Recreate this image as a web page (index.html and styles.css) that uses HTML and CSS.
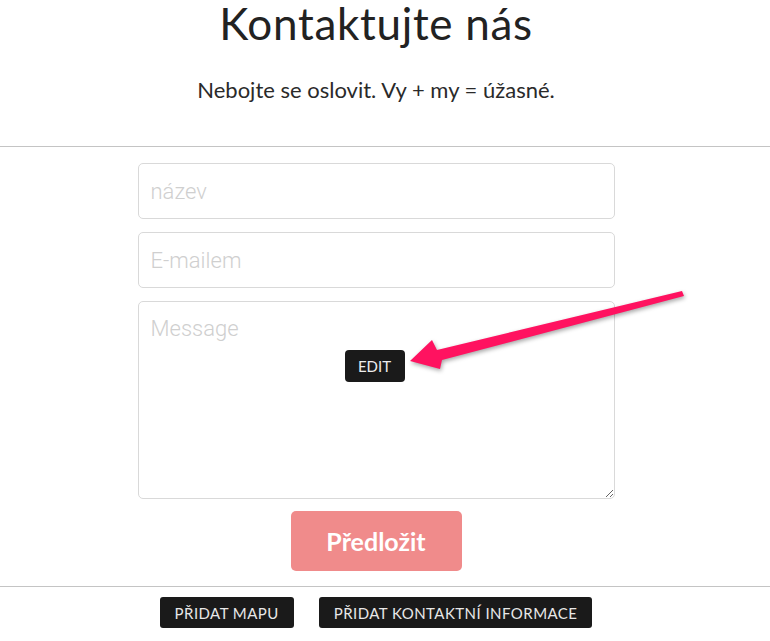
FILE: index.html
```html
<!DOCTYPE html>
<html lang="cs">
<head>
  <meta charset="UTF-8">
  <title>Kontaktujte nás</title>
  <link rel="stylesheet" href="styles.css">
</head>
<body>

<header class="intro">
  <h1>Kontaktujte nás</h1>
  <p>Nebojte se oslovit. Vy + my = úžasné.</p>
</header>

<hr class="divider">

<form class="contact-form">
  <input type="text" class="field" placeholder="název">
  <input type="email" class="field" placeholder="E-mailem">
  <div class="message-wrap">
    <textarea class="field message" placeholder="Message"></textarea>
    <span class="edit-badge">EDIT</span>
    <!-- šipka ukazuje na tlačítko EDIT -->
    <svg class="pointer" width="295" height="100" viewBox="0 0 295 100">
      <polygon points="10,81 32,60 37,70 282,11 284,16 42,80 40,89" fill="#ff1260"/>
    </svg>
  </div>
  <button type="button" class="submit">Předložit</button>
</form>

<hr class="divider">

<div class="block-actions">
  <button type="button" class="block-btn">PŘIDAT MAPU</button>
  <button type="button" class="block-btn">PŘIDAT KONTAKTNÍ INFORMACE</button>
</div>

</body>
</html>
```

FILE: styles.css
```css
* {
  box-sizing: border-box;
}

body {
  margin: 0;
  font-family: 'Lato', sans-serif;
  color: #222;
  background-color: white;
}

.intro,
.contact-form,
.block-actions {
  width: 752px;
}

.intro {
  text-align: center;
  padding-top: 1px;
}

h1 {
  margin: 0;
  font-size: 44px;
  line-height: 44px;
  font-weight: 400;
  letter-spacing: 0.7px;
}

.intro p {
  margin: 30px 0 0;
  font-size: 22px;
  line-height: 29px;
  color: #2a2a2a;
}

.divider {
  margin: 0;
  border: none;
  border-top: 1px solid #c4c4c4;
}

.intro + .divider {
  margin-top: 42px;
}

.contact-form {
  display: flex;
  flex-direction: column;
  align-items: center;
  padding: 16px 0 15px;
}

.field {
  display: block;
  width: 477px;
  height: 56px;
  margin-bottom: 13px;
  padding: 0 12px;
  border: 1px solid #d9d9d9;
  border-radius: 5px;
  font-family: 'Roboto', sans-serif;
  font-weight: 300;
  font-size: 22px;
  color: #333;
  outline: none;
}

.field::placeholder {
  color: #cfcfcf;
}

.message-wrap {
  position: relative;
}

.message {
  height: 198px;
  margin-bottom: 0;
  padding-top: 14px;
  resize: vertical;
}

.edit-badge {
  position: absolute;
  left: 207px;
  top: 49px;
  width: 60px;
  height: 32px;
  line-height: 32px;
  background-color: #1a1a1a;
  border-radius: 4px;
  color: #eee;
  font-size: 15px;
  text-align: center;
}

.pointer {
  position: absolute;
  left: 262px;
  top: -21px;
  filter: drop-shadow(1px 2px 2px rgba(0,0,0,0.35));
}

.submit {
  margin-top: 12px;
  width: 171px;
  height: 60px;
  border: none;
  border-radius: 5px;
  background-color: #f08b8b;
  color: white;
  font-family: 'Lato', sans-serif;
  font-weight: 700;
  font-size: 25px;
  cursor: pointer;
}

.block-actions {
  display: flex;
  justify-content: center;
  gap: 25px;
  padding-top: 10px;
}

.block-btn {
  height: 31px;
  padding: 0 15px;
  border: none;
  border-radius: 3px;
  background-color: #1a1a1a;
  color: #e8e8e8;
  font-family: 'Lato', sans-serif;
  font-size: 15px;
  letter-spacing: 0.45px;
  cursor: pointer;
}
```
